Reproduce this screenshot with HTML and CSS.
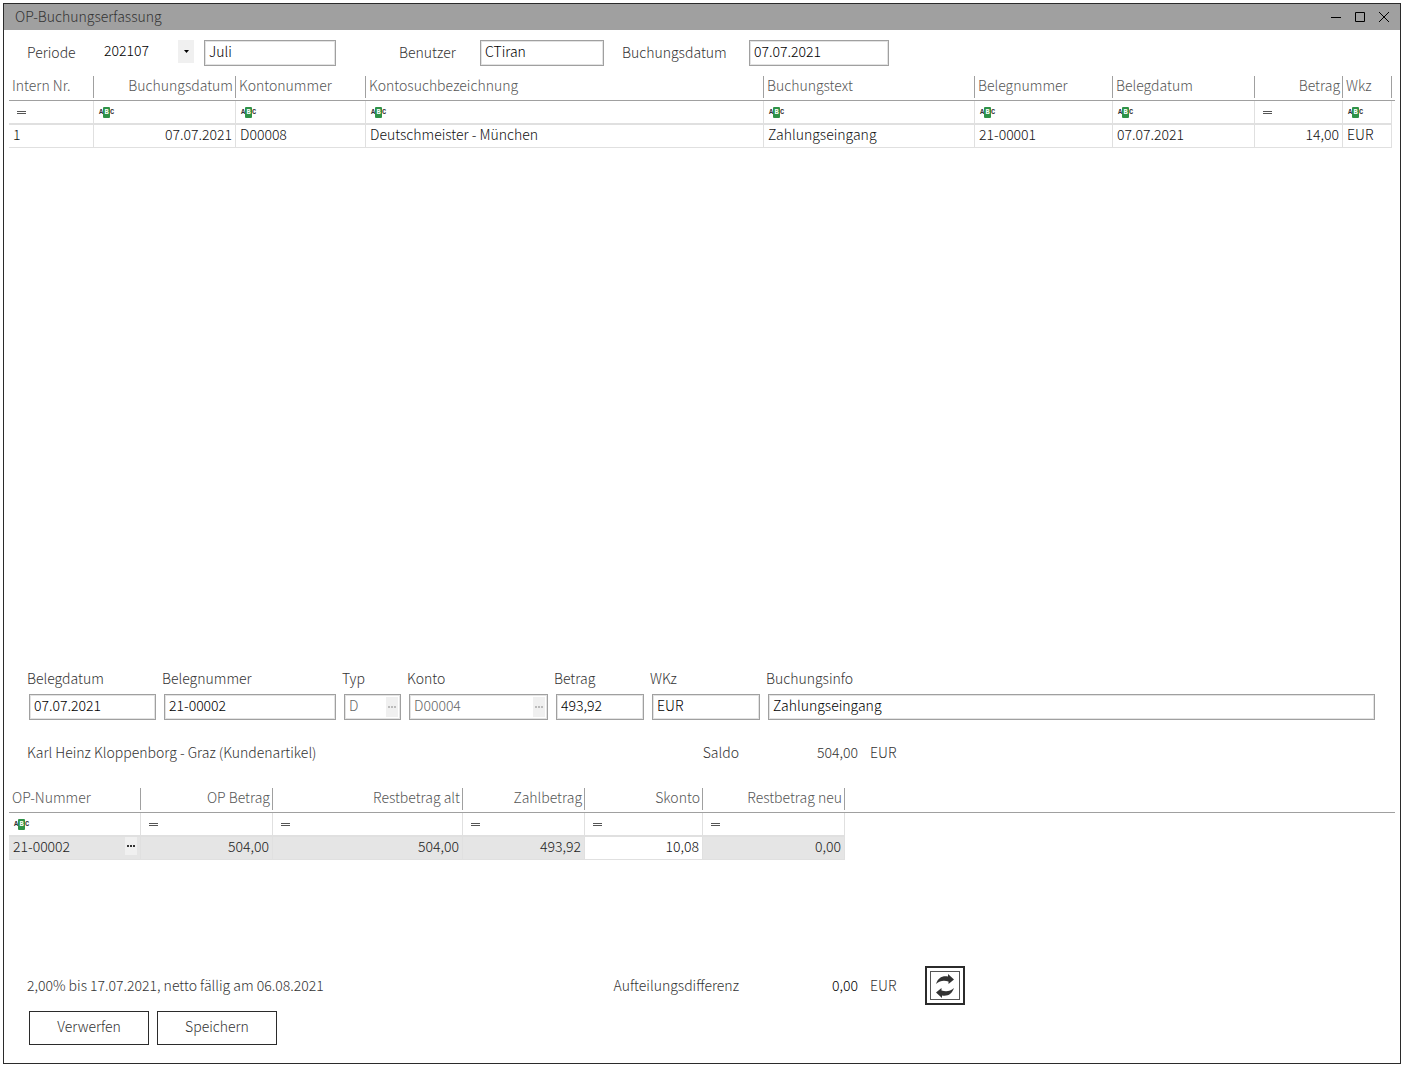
FILE: index.html
```html
<!DOCTYPE html>
<html lang="de">
<head>
<meta charset="utf-8">
<title>OP-Buchungserfassung</title>
<link rel="stylesheet" href="styles.css">
</head>
<body>
<svg class="defs" aria-hidden="true">
  <symbol id="eq" viewBox="0 0 9 3"><path d="M0 0h9v1H0zM0 2h9v1H0z" fill="#555"/></symbol>
  <symbol id="dots" viewBox="0 0 8 2"><path d="M0 0h2v2H0zM3 0h2v2H3zM6 0h2v2H6z" fill="currentColor"/></symbol>
</svg>
<main class="window">
  <header class="titlebar">
    <h1 class="title">OP-Buchungserfassung</h1>
    <button class="winbtn" type="button" aria-label="Minimieren"><svg width="10" height="10"><path d="M0 5.5h10"/></svg></button>
    <button class="winbtn" type="button" aria-label="Maximieren"><svg width="10" height="10"><path d="M.5.5h9v9h-9z"/></svg></button>
    <button class="winbtn" type="button" aria-label="Schließen"><svg width="10" height="10"><path d="M0 0l10 10M10 0L0 10"/></svg></button>
  </header>

  <form class="toolbar">
    <label for="periode">Periode</label>
    <div class="combo">
      <select class="combo-select" id="periode"><option>202107</option></select>
      <span class="combo-arrow"><svg width="5" height="3"><path d="M0 0h5L2.500 3z"/></svg></span>
    </div>
    <input class="box box-month" aria-label="Monat" value="Juli">
    <label for="benutzer">Benutzer</label>
    <input class="box box-user" id="benutzer" value="CTiran">
    <label for="bdatum">Buchungsdatum</label>
    <input class="box" id="bdatum" value="07.07.2021">
  </form>

  <section class="bookings">
    <table class="grid">
      <colgroup><col class="c-nr"><col class="c-date"><col class="c-konto"><col><col class="c-text"><col class="c-beleg"><col class="c-date"><col class="c-betrag"><col class="c-wkz"><col class="c-end"></colgroup>
      <thead>
        <tr><th>Intern Nr.</th><th class="num">Buchungsdatum</th><th>Kontonummer</th><th>Kontosuchbezeichnung</th><th>Buchungstext</th><th>Belegnummer</th><th>Belegdatum</th><th class="num">Betrag</th><th>Wkz</th><th class="rest"></th></tr>
      </thead>
      <tbody>
        <tr class="filter">
          <td><button class="eq" type="button" aria-label="Filter Intern Nr."><svg><use href="#eq"/></svg></button></td>
          <td><button class="abc" type="button" aria-label="Filter Buchungsdatum">A<b>B</b>C</button></td>
          <td><button class="abc" type="button" aria-label="Filter Kontonummer">A<b>B</b>C</button></td>
          <td><button class="abc" type="button" aria-label="Filter Kontosuchbezeichnung">A<b>B</b>C</button></td>
          <td><button class="abc" type="button" aria-label="Filter Buchungstext">A<b>B</b>C</button></td>
          <td><button class="abc" type="button" aria-label="Filter Belegnummer">A<b>B</b>C</button></td>
          <td><button class="abc" type="button" aria-label="Filter Belegdatum">A<b>B</b>C</button></td>
          <td><button class="eq" type="button" aria-label="Filter Betrag"><svg><use href="#eq"/></svg></button></td>
          <td><button class="abc" type="button" aria-label="Filter Wkz">A<b>B</b>C</button></td>
          <td class="rest"></td>
        </tr>
        <tr class="data"><td>1</td><td class="num">07.07.2021</td><td>D00008</td><td>Deutschmeister - München</td><td>Zahlungseingang</td><td>21-00001</td><td>07.07.2021</td><td class="num">14,00</td><td>EUR</td><td class="rest"></td></tr>
      </tbody>
    </table>
  </section>

  <form class="entry">
    <div class="field f-datum"><label for="e1">Belegdatum</label><input class="box" id="e1" value="07.07.2021"></div>
    <div class="field f-nummer"><label for="e2">Belegnummer</label><input class="box" id="e2" value="21-00002"></div>
    <div class="field f-typ"><label for="e3">Typ</label>
      <div class="lookup"><input class="box" id="e3" value="D" disabled><button class="more" type="button" aria-label="Typ auswählen" disabled><svg><use href="#dots"/></svg></button></div></div>
    <div class="field f-konto"><label for="e4">Konto</label>
      <div class="lookup"><input class="box" id="e4" value="D00004" disabled><button class="more" type="button" aria-label="Konto auswählen" disabled><svg><use href="#dots"/></svg></button></div></div>
    <div class="field f-betrag"><label for="e5">Betrag</label><input class="box" id="e5" value="493,92"></div>
    <div class="field f-wkz"><label for="e6">WKz</label><input class="box" id="e6" value="EUR"></div>
    <div class="field f-info"><label for="e7">Buchungsinfo</label><input class="box" id="e7" value="Zahlungseingang"></div>
  </form>

  <div class="summary saldo">
    <span>Karl Heinz Kloppenborg - Graz (Kundenartikel)</span>
    <span class="num">Saldo</span><span class="num">504,00</span><span class="unit">EUR</span>
  </div>

  <section class="items">
    <table class="grid">
      <colgroup><col class="o-nr"><col class="o-op"><col class="o-alt"><col class="o-zahl"><col class="o-skonto"><col class="o-neu"><col></colgroup>
      <thead>
        <tr><th>OP-Nummer</th><th class="num">OP Betrag</th><th class="num">Restbetrag alt</th><th class="num">Zahlbetrag</th><th class="num">Skonto</th><th class="num">Restbetrag neu</th><th class="rest"></th></tr>
      </thead>
      <tbody>
        <tr class="filter">
          <td><button class="abc" type="button" aria-label="Filter OP-Nummer">A<b>B</b>C</button></td>
          <td><button class="eq" type="button" aria-label="Filter OP Betrag"><svg><use href="#eq"/></svg></button></td>
          <td><button class="eq" type="button" aria-label="Filter Restbetrag alt"><svg><use href="#eq"/></svg></button></td>
          <td><button class="eq" type="button" aria-label="Filter Zahlbetrag"><svg><use href="#eq"/></svg></button></td>
          <td><button class="eq" type="button" aria-label="Filter Skonto"><svg><use href="#eq"/></svg></button></td>
          <td><button class="eq" type="button" aria-label="Filter Restbetrag neu"><svg><use href="#eq"/></svg></button></td>
          <td class="rest"></td>
        </tr>
        <tr class="data locked"><td><div class="cell">21-00002<button class="more" type="button" aria-label="OP auswählen"><svg><use href="#dots"/></svg></button></div></td><td class="num">504,00</td><td class="num">504,00</td><td class="num">493,92</td><td class="num open">10,08</td><td class="num">0,00</td><td class="rest"></td></tr>
      </tbody>
    </table>
  </section>

  <div class="summary">
    <span>2,00% bis 17.07.2021, netto fällig am 06.08.2021</span>
    <span class="num">Aufteilungsdifferenz</span><span class="num strong">0,00</span><span class="unit">EUR</span>
    <button class="refresh" type="button" aria-label="Aktualisieren">
      <svg width="30" height="30" viewBox="0 0 30 30"><path d="M6 13C8 7 12 4.500 18 5.500V3l6 5.500-5.500 4.500v-2.500C14 9 10 9.500 6 13z"/><path d="M24 17c-2 6-6 8.500-12 7.500V27l-6-5.500 5.500-4.500v2.500C16 21 20 20.500 24 17z"/></svg>
    </button>
  </div>
  <footer class="actions">
    <button class="btn" type="button">Verwerfen</button>
    <button class="btn" type="button">Speichern</button>
  </footer>
</main>
</body>
</html>
```
FILE: styles.css
```css
* { box-sizing: border-box; }
body {
  margin: 0;
  padding: 3px 2px 4px 3px;
  background: #fff;
  color: #333;
  font: 300 14px/20px "Noto Sans CJK SC", "Noto Sans", sans-serif;
}
button, input, select { font: inherit; color: inherit; border-radius: 0; }
button { padding: 0; border: 0; background: none; }
svg { display: block; }
.defs { position: absolute; width: 0; height: 0; }

.window {
  display: flex;
  flex-direction: column;
  min-height: calc(100vh - 7px);
  border: 1px solid #2b2b2b;
}
.titlebar {
  display: flex;
  align-items: center;
  gap: 14px;
  height: 26px;
  padding: 0 11px;
  background: #a0a0a0;
}
.title { flex: 1; margin: 0; padding-bottom: 2px; font-size: 14px; font-weight: 300; }
.winbtn path { fill: none; stroke: #000; }

.toolbar {
  display: grid;
  grid-template-columns: 72px 105px 195px 81px 142px 127px 140px;
  align-items: center;
  padding: 10px 23px;
}
.toolbar label { padding-bottom: 3px; }
.combo { position: relative; width: 95px; }
.combo-select {
  display: block;
  appearance: none;
  width: 100%;
  height: 26px;
  padding: 0 5px 6px;
  border: 0;
  background: none;
  color: #000;
}
.combo-arrow {
  position: absolute;
  top: 0;
  right: 0;
  display: grid;
  place-items: center;
  width: 16px;
  height: 23px;
  background: #f0f0f0;
  pointer-events: none;
}
.box {
  display: block;
  width: 100%;
  height: 26px;
  padding: 0 4px 5px;
  border: 1px solid #a0a0a0;
  box-shadow: inset 0 0 0 1px #e3e3e3;
  background: #fff;
  color: #000;
}
.box:disabled { color: #666; }
.box-month { width: 132px; }
.box-user { width: 124px; }

.bookings { flex: 1; padding: 0 5px; }
.items { min-height: 178px; padding: 0 5px; }
.grid { width: 100%; table-layout: fixed; border-collapse: separate; border-spacing: 0; line-height: 18px; }
.grid th, .grid td { padding: 0 3px; text-align: left; white-space: nowrap; font-weight: 300; }
.grid th {
  height: 25px;
  padding-bottom: 6px;
  border-bottom: 1px solid #a0a0a0;
  background: linear-gradient(#a0a0a0, #a0a0a0) right top / 1px 22px no-repeat;
  color: #555;
}
.grid td { border-right: 1px solid #e0e0e0; border-bottom: 1px solid #e0e0e0; }
.grid .filter td { height: 24px; padding: 0 5px; border-bottom-width: 2px; }
.grid .data td { height: 23px; padding: 0 3px 4px 4px; color: #111; }
.grid .num { text-align: right; }
.grid .locked td { background: #e5e5e5; color: #222; }
.grid .locked .open { background: #fff; color: #111; }
.grid .rest, .grid .filter .rest, .grid .data .rest { padding: 0; }
.grid th.rest { background: none; }
.grid td.rest, .grid .locked .rest { border: 0; background: none; }

.c-nr { width: 85px; }
.c-date { width: 142px; }
.c-konto { width: 130px; }
.c-text { width: 211px; }
.c-beleg { width: 138px; }
.c-betrag { width: 88px; }
.c-wkz { width: 49px; }
.c-end { width: 3px; }
.o-nr, .o-op { width: 132px; }
.o-alt { width: 190px; }
.o-zahl { width: 122px; }
.o-skonto { width: 118px; }
.o-neu { width: 142px; }

.eq { display: block; padding-left: 3px; }
.eq svg { width: 9px; height: 3px; }
.abc {
  display: grid;
  grid-template-columns: 4px 7px 4px;
  justify-items: center;
  color: #333;
  font: bold 7px/11px "Liberation Mono", monospace;
}
.abc b { width: 7px; border-radius: 1px; background: #2f9247; color: #fff; text-align: center; }
.cell { display: flex; justify-content: space-between; align-items: center; }
.more {
  display: grid;
  place-items: center;
  width: 12px;
  height: 18px;
  background: #f0f0f0;
  color: #333;
}
.more svg { width: 8px; height: 2px; }
.more:disabled { color: #bbb; }

.entry { display: flex; gap: 6px; padding: 0 25px 0 23px; }
.field { display: flex; flex-direction: column; gap: 6px; }
.field > .box, .lookup { width: auto; margin-left: 2px; }
.f-datum { width: 129px; }
.f-nummer { width: 174px; }
.f-typ { width: 59px; }
.f-konto { width: 141px; }
.f-betrag { width: 90px; }
.f-wkz { width: 110px; }
.f-info { flex: 1; }
.lookup { position: relative; }
.lookup .more { position: absolute; top: 3px; right: 3px; height: 20px; }

.summary {
  display: grid;
  grid-template-columns: 576px 136px 119px 67px 40px;
  align-items: center;
  padding: 0 23px;
}
.summary span { padding-bottom: 2px; }
.saldo { margin: 22px 0 24px; }
.num { text-align: right; }
.unit { padding-left: 12px; }
.strong { color: #000; }
.refresh {
  display: grid;
  place-items: center;
  height: 39px;
  border: 2px solid #2b2b2b;
  outline: 1px solid #555;
  outline-offset: -6px;
}
.refresh path { fill: #333; }
.actions { display: flex; gap: 8px; padding: 6px 25px 18px; }
.btn { width: 120px; height: 34px; padding-bottom: 5px; border: 1px solid #2b2b2b; }
```
